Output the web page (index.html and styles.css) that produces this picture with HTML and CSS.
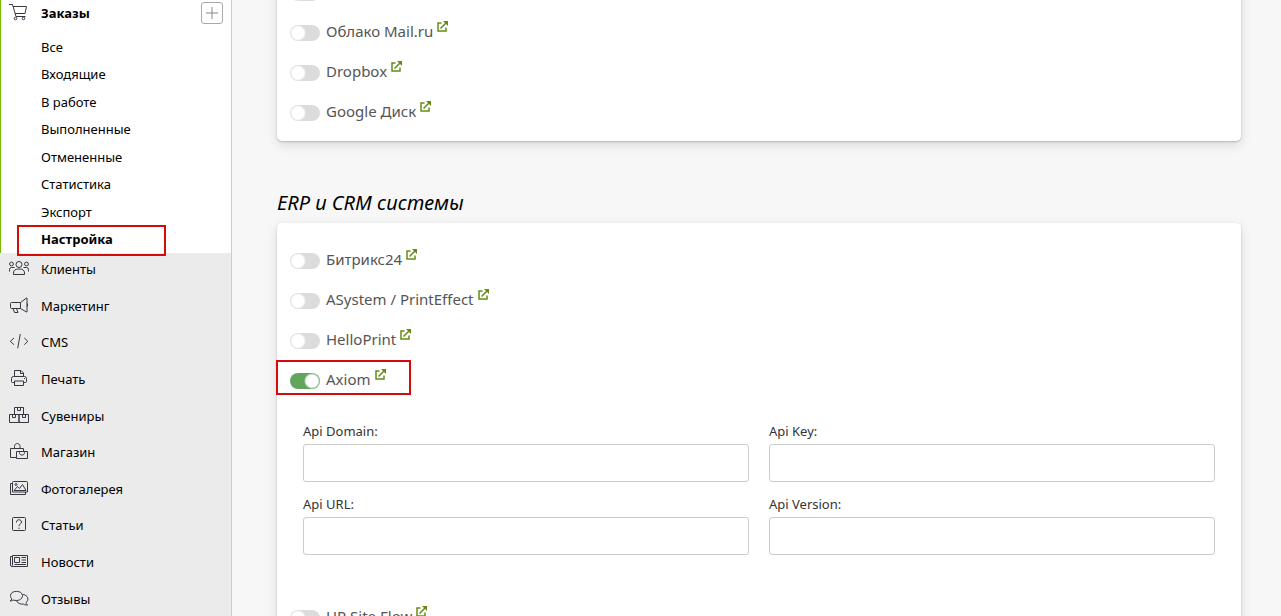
FILE: index.html
```html
<!DOCTYPE html>
<html lang="ru">
<head>
<meta charset="utf-8">
<title>Настройка</title>
<link rel="stylesheet" href="styles.css">
</head>
<body>
<svg class="defs" aria-hidden="true"><symbol id="ext" viewBox="0 0 11 11"><path d="M4.500 2H1v8h8V6.500M3.500 7.500 9.500 1.500" fill="none" stroke="currentColor" stroke-width="1.500"/><path d="M6 0h5v5z" fill="currentColor"/></symbol></svg>
<div class="app">
  <nav class="sidebar">
    <section class="orders">
      <div class="orders-head">
        <svg class="icon" viewBox="0 0 24 20"><path d="M2 1.500h3.500L9 13.500h9.500M6 3.500h13.500l-1.500 7H8"/><circle cx="8.500" cy="15.500" r="1.300"/><circle cx="16.500" cy="15.500" r="1.300"/></svg>
        <a href="#">Заказы</a>
        <button class="add" type="button" aria-label="+"><svg viewBox="0 0 12 12"><path d="M6 0v12M0 6h12"/></svg></button>
      </div>
      <div class="submenu">
        <a href="#">Все</a>
        <a href="#">Входящие</a>
        <a href="#">В работе</a>
        <a href="#">Выполненные</a>
        <a href="#">Отмененные</a>
        <a href="#">Статистика</a>
        <a href="#">Экспорт</a>
        <a href="#" class="current">Настройка</a>
      </div>
    </section>
    <div class="menu">
      <a href="#"><svg class="icon" viewBox="0 0 24 20"><circle cx="12" cy="5.500" r="3"/><circle cx="4.500" cy="5" r="1.900"/><circle cx="19.500" cy="5" r="1.900"/><path d="M6.500 15.500V14c0-3 2-4 5.500-4s5.500 1 5.500 4v1.500zM2.500 12.500v-2q0-2 2-2h3M21.500 12.500v-2q0-2-2-2h-3"/></svg>Клиенты</a>
      <a href="#"><svg class="icon" viewBox="0 0 24 20"><path d="M13.500 6.500h-9q-1 0-1 1v4q0 1 1 1h9l6 3.500h.500V2h-.500zM13.500 6.500v6M6 12.500l1.500 4H11l-1.500-4M20 7.500q1.500 1.500 0 3"/></svg>Маркетинг</a>
      <a href="#"><svg class="icon" viewBox="0 0 24 20"><path d="M7 6 3.300 9.300 7 12.700M13.300 2l-2.600 14.300M17.300 6l3.500 3.300-3.500 3.400"/></svg>CMS</a>
      <a href="#"><svg class="icon" viewBox="0 0 24 20"><path d="M7.500 7.500v-6H14l2.500 2.500v3.500M13.500 1.500v3h3M7.500 13.500h-2q-1 0-1-1v-3q0-2 2-2h11q2 0 2 2v3q0 1-1 1h-2M7.500 12v4.500h9V12zM17 9.500h1"/></svg>Печать</a>
      <a href="#"><svg class="icon" viewBox="0 0 24 20"><path d="M7.500 1.500h9v7h-9zM2.500 8.500h9.500v8H2.500zM12 8.500h9.500v8H12zM10.500 1.500v3h3v-3M5.500 8.500v3h3v-3M15.500 8.500v3h3v-3"/></svg>Сувениры</a>
      <a href="#"><svg class="icon" viewBox="0 0 24 20"><path d="M9.500 15.500h-6v-9h13v3M7.500 6.500v-2c0-4 5.500-4 5.500 0v2M9.500 9.500h11v7h-11zM12.500 9.500v1c0 3.500 5 3.500 5 0v-1"/></svg>Магазин</a>
      <a href="#"><svg class="icon" viewBox="0 0 24 20"><path d="M6.500 2.500h13q1 0 1 1v9.500h-15V3.500q0-1 1-1M5.500 4.500h-2v11h15V13M7 11.500l3.500-4 2 2 3-4 3.500 6z"/><circle cx="9" cy="5.500" r="1"/></svg>Фотогалерея</a>
      <a href="#"><svg class="icon" viewBox="0 0 24 20"><rect x="5.500" y="2.500" width="13" height="13" rx="1"/><path d="M9.500 7.500V7c0-3 5-3 5 0 0 2-2.500 2-2.500 4M12 12.500v1.500"/></svg>Статьи</a>
      <a href="#"><svg class="icon" viewBox="0 0 24 20"><path d="M5.500 3.500h15v11H5q-1.500 0-1.500-1.500V4.500h2M5.500 3.500v10M7.500 5.500h5v5h-5zM14.500 5.500h4.500M14.500 8h4.500M14.500 10.500h4.500M7.500 12.500h11.500"/></svg>Новости</a>
      <a href="#"><svg class="icon" viewBox="0 0 24 20"><path d="M3 12c1.500 0 2.500-.500 3-1 5 1.500 9.500-.500 9.500-4.500C15.500 1 3.500 1 3.500 6.500c0 1.500.500 2.500 1.500 3.500zM16 5.500c5 .500 6.500 5.500 3 8 0 1 .500 2 1.500 2.500-1.500 0-3 0-4-1-3 .500-6-.500-7-3.500"/></svg>Отзывы</a>
    </div>
  </nav>
  <main class="content">
    <section class="card storage">
      <div class="option"><input type="checkbox" class="switch" id="s0"><label for="s0"></label></div>
      <div class="option"><input type="checkbox" class="switch" id="s1"><label for="s1">Облако Mail.ru</label><a href="#"><svg class="ext"><use href="#ext"/></svg></a></div>
      <div class="option"><input type="checkbox" class="switch" id="s2"><label for="s2">Dropbox</label><a href="#"><svg class="ext"><use href="#ext"/></svg></a></div>
      <div class="option"><input type="checkbox" class="switch" id="s3"><label for="s3">Google Диск</label><a href="#"><svg class="ext"><use href="#ext"/></svg></a></div>
    </section>
    <h2>ERP и CRM системы</h2>
    <section class="card systems">
      <div class="option"><input type="checkbox" class="switch" id="e1"><label for="e1">Битрикс24</label><a href="#"><svg class="ext"><use href="#ext"/></svg></a></div>
      <div class="option"><input type="checkbox" class="switch" id="e2"><label for="e2">ASystem / PrintEffect</label><a href="#"><svg class="ext"><use href="#ext"/></svg></a></div>
      <div class="option"><input type="checkbox" class="switch" id="e3"><label for="e3">HelloPrint</label><a href="#"><svg class="ext"><use href="#ext"/></svg></a></div>
      <div class="option marked"><input type="checkbox" class="switch" id="e4" checked><label for="e4">Axiom</label><a href="#"><svg class="ext"><use href="#ext"/></svg></a></div>
      <form class="fields">
        <div class="field"><label for="domain">Api Domain:</label><input type="text" id="domain"></div>
        <div class="field"><label for="key">Api Key:</label><input type="text" id="key"></div>
        <div class="field"><label for="url">Api URL:</label><input type="text" id="url"></div>
        <div class="field"><label for="version">Api Version:</label><input type="text" id="version"></div>
      </form>
      <div class="option"><input type="checkbox" class="switch" id="e5"><label for="e5">HP Site Flow</label><a href="#"><svg class="ext"><use href="#ext"/></svg></a></div>
    </section>
  </main>
</div>
</body>
</html>
```
FILE: styles.css
```css
*, *::before { box-sizing: border-box; }
body {
  margin: 0;
  background: #f7f7f7;
  color: #000;
  font: 14px/20px "Noto Sans", "Open Sans", sans-serif;
}
a { color: inherit; text-decoration: none; }
.defs { position: absolute; width: 0; height: 0; }
.app { display: flex; height: 100vh; overflow: hidden; }

.sidebar {
  flex: 0 0 232px;
  background: #ebebeb;
  border-right: 1px solid #ccc;
  font-size: 13px;
}
.orders { background: #fff; border-left: 1px solid #76b900; }
.orders-head {
  display: flex;
  align-items: center;
  height: 26px;
  padding: 0 8px 0 6px;
  font-weight: 700;
}
.icon {
  flex: none;
  width: 24px;
  height: 20px;
  margin-right: 10px;
  fill: none;
  stroke: #3a3540;
  stroke-width: 1;
}
.add {
  display: grid;
  place-items: center;
  width: 22px;
  height: 22px;
  margin-left: auto;
  padding: 0;
  background: #fff;
  border: 1px solid #aaa;
  border-radius: 3px;
}
.add svg { width: 12px; height: 12px; stroke: #888; stroke-width: 1; }
.submenu {
  display: grid;
  grid-auto-rows: 1fr;
  align-items: center;
  height: 227px;
  padding: 7px 0 0 40px;
}
.current { position: relative; font-weight: 700; }
.current::before {
  content: "";
  position: absolute;
  left: -24px;
  top: -4px;
  width: 149px;
  height: 31px;
  border: 2px solid #d40b0b;
}
.menu { display: grid; grid-auto-rows: 1fr; height: 366px; margin-top: -2px; }
.menu a { display: flex; align-items: center; padding-left: 7px; }

.content { flex: 1; min-width: 0; padding: 0 40px 0 45px; }
.card {
  background: #fff;
  border-radius: 5px;
  box-shadow: 0 1px 2px rgba(0, 0, 0, .2), 0 4px 12px rgba(0, 0, 0, .12);
}
.storage { margin-top: -32px; padding: 5px 13px 8px; }
.systems { padding: 18px 13px; }
h2 {
  margin: 48px 0 7px;
  font-size: 20px;
  line-height: 27px;
  font-weight: 400;
  font-style: italic;
}
.option {
  position: relative;
  display: flex;
  align-items: center;
  height: 40px;
  color: #555;
  font-size: 15px;
}
.option label { margin: 0 4px 4px 6px; }
.option a { display: flex; margin-bottom: 13px; color: #648c14; }
.ext { width: 11px; height: 11px; }
.switch {
  appearance: none;
  width: 30px;
  height: 16px;
  margin: 0;
  border-radius: 8px;
  background: radial-gradient(circle at 8px 8px, #fff 6px, transparent 8px) #dcdcdc;
}
.switch:checked { background: radial-gradient(circle at 22px 8px, #fff 6px, transparent 8px) #62a55d; }
.marked::before {
  content: "";
  position: absolute;
  left: -14px;
  top: -1px;
  width: 135px;
  height: 35px;
  border: 2px solid #d40b0b;
  pointer-events: none;
}
.fields {
  display: grid;
  grid-template-columns: 1fr 1fr;
  gap: 12px 20px;
  padding: 20px 13px 43px;
}
.field { display: flex; flex-direction: column; gap: 2px; color: #333; font-size: 13px; line-height: 21px; }
.field input {
  width: 100%;
  height: 38px;
  padding: 0 10px;
  background: #fff;
  border: 1px solid #ccc;
  border-radius: 3px;
  font: inherit;
}
```
